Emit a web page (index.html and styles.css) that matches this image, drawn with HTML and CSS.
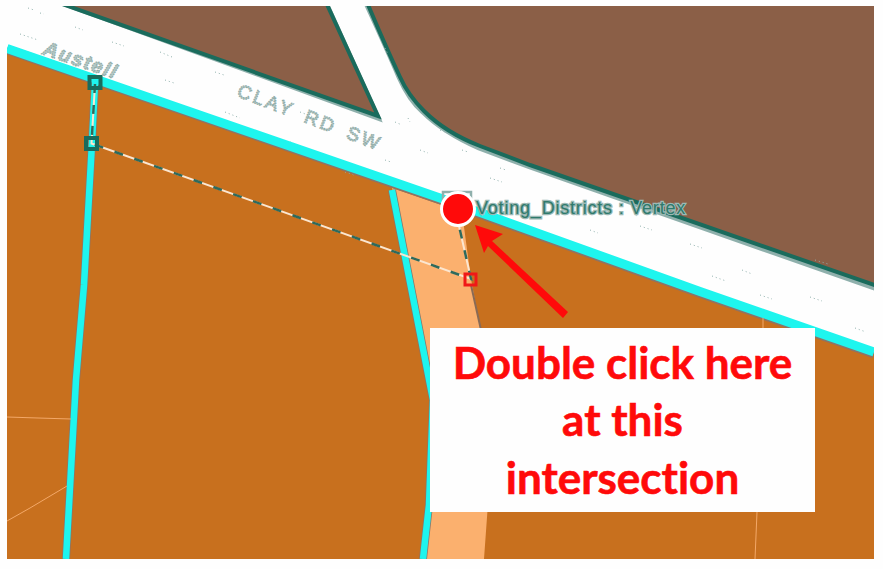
FILE: index.html
```html
<!DOCTYPE html>
<html lang="en">
<head>
<meta charset="utf-8">
<title>Voting districts vertex</title>
<link rel="stylesheet" href="styles.css">
</head>
<body>
<main class="map">
  <svg class="map-art" viewBox="7 6 867 553" width="867" height="553">
    <rect class="road" x="7" y="6" width="867" height="553"/>
    <polygon class="parcel" points="7,48 440,198 700,291.5 874,352 874,559 7,559"/>
    <polygon class="peach" points="392,188 462,212 471,279 480,327 494,420 484,559 423,559 429,505 433,400"/>

    <path class="brown-halo" d="M51 -1 L378 118 L326 3"/>
    <path class="brown-halo" d="M366 3 C382 38 391 58 399 77 C407 95 417 107 423 112 C439 128 461 140 479 148 L530 167 L880 290"/>
    <polygon class="brown" points="51,0 325,0 378,116"/>
    <path class="brown" d="M366 0 C382 38 391 58 400 77 C408 95 418 105 424 111 C440 127 462 139 480 146 L530 165 L880 287 L880 0 Z"/>

    <path class="speckle" d="M28 8 L34 10 M40 13 L44 14 M75 27 L83 30 M112 42 L124 46 M20 34 L38 40 M160 52 L172 57 M215 72 L224 75 M165 80 L174 83 M225 112 L240 118 M300 112 L316 118 M350 128 L360 131 M395 122 L402 125 M420 150 L428 153 M490 178 L502 182 M590 230 L598 233 M640 226 L652 230 M690 244 L702 248 M640 268 L650 272 M712 276 L726 281 M760 295 L772 299 M810 297 L822 301 M855 328 L866 332 M815 260 L828 264 M742 270 L752 274 M290 142 L300 146 M345 172 L354 175 M385 160 L391 162 M385 48 L388 54 M408 118 L410 122 M440 130 L445 132 M462 150 L468 152 M500 168 L506 170"/>

    <path class="edge" d="M7 49.5 L440 199.5 L700 293 L874 353.5"/>
    <path class="edge thin" d="M95 82 L92 143 L84 285 L76 380 L66 559"/>
    <path class="edge thin" d="M392 190 L433 400 L429 505 L423 559"/>
    <path class="cyan" d="M95 82 L92 143 L84 285 L76 380 L66 559"/>
    <path class="cyan" d="M392 190 L433 400 L429 505 L423 559"/>
    <path class="cyan wide" d="M7 48.5 L440 198 L700 291.5 L874 352"/>

    <path class="faint" d="M7 417 L38 418 L71 419 M7 521 L30 508 L67 486 M763 318 L763 330 M757 512 L755 559"/>
    <path class="trail" d="M471 285 L481 330"/>

    <path class="dash-light" d="M95 84 L91.5 143.5 L471 279 L459 226"/>
    <path class="dash-dark" d="M95 84 L91.5 143.5 L471 279 L459 226"/>

    <rect class="handle" x="89.5" y="77" width="11" height="11"/>
    <rect class="handle" x="86" y="138" width="11" height="11"/>
    <rect class="handle-red" x="465" y="274" width="11" height="11"/>

    <path class="snap" d="M443 203 V192 H471 V203"/>
    <circle class="vertex" cx="458" cy="209" r="16.5"/>

    <polygon class="arrow" points="475,225 503,234 492,241 568,312 563,318 488,246 484,253"/>

    <text class="label-street austell" transform="translate(42 54) rotate(19)">Austell</text>
    <text class="label-street clay" transform="translate(236 96) rotate(21)">CLAY RD SW</text>
    <text class="label-tip halo" x="476" y="214">Voting_Districts : Vertex</text>
    <text class="label-tip" x="476" y="214">Voting_Districts : Vertex</text>
  </svg>
  <aside class="callout">
    <p class="callout-text">Double click here<br>at this<br>intersection</p>
  </aside>
</main>
</body>
</html>
```
FILE: styles.css
```css
html, body {
  margin: 0;
  background: #fefefe;
}
.map {
  position: relative;
  width: 867px;
  height: 553px;
  margin: 6px 0 0 7px;
}
.map-art { display: block; }
.road { fill: #fefefe; }
.parcel { fill: #c8701e; }
.peach { fill: #fbb06e; }
.brown { fill: #8b5f47; stroke: #1a6b5c; stroke-width: 4; }
.brown-halo { fill: none; stroke: #8fb0ac; stroke-width: 5; }
.speckle { fill: none; stroke: #8fb0ac; stroke-width: 1; stroke-dasharray: 1 3; }
.edge { fill: none; stroke: #8c7468; stroke-width: 9.5; }
.edge.thin { stroke-width: 8; }
.cyan { fill: none; stroke: #1ef5ee; stroke-width: 6.5; }
.cyan.wide { stroke-width: 9; }
.faint { fill: none; stroke: #f3a868; stroke-width: 1; }
.trail { fill: none; stroke: #8a6a55; stroke-width: 2; }
.dash-light { fill: none; stroke: #fbe6d0; stroke-width: 2; }
.dash-dark { fill: none; stroke: #2f6a5c; stroke-width: 2.5; stroke-dasharray: 9 12; }
.handle { fill: none; stroke: #1a6b5c; stroke-width: 4; }
.handle-red { fill: none; stroke: #f01818; stroke-width: 3; }
.snap { fill: none; stroke: #8fb0ac; stroke-width: 2.5; }
.vertex { fill: #ff0a0a; stroke: #fff; stroke-width: 3; }
.arrow { fill: #ff0a0a; }
.label-street {
  fill: #b4c8c5;
  stroke: #8fabA7;
  stroke-width: 1.2;
  stroke-dasharray: 1.5 1;
  font-family: "Liberation Sans", sans-serif;
}
.austell { font-size: 20px; font-style: italic; font-weight: bold; letter-spacing: 1.6px; }
.clay { font-size: 19px; letter-spacing: 2.9px; word-spacing: 4px; }
.label-tip {
  fill: #2f7a6c;
  font-family: "Liberation Sans", sans-serif;
  font-size: 18px;
  letter-spacing: 0.8px;
}
.label-tip.halo { stroke: #9cb9b5; stroke-width: 2.5; fill: #fff; }
.callout {
  position: absolute;
  left: 423px;
  top: 322px;
  width: 385px;
  height: 184px;
  background: #fefefe;
  display: flex;
  align-items: center;
  justify-content: center;
}
.callout-text {
  margin: 0;
  color: #ff0a0a;
  font-family: Lato, "Open Sans", sans-serif;
  font-weight: 700;
  font-size: 44px;
  line-height: 57.5px;
  text-align: center;
  font-variant-ligatures: none;
  -webkit-text-stroke: 0.6px #ff0a0a;
}
```
